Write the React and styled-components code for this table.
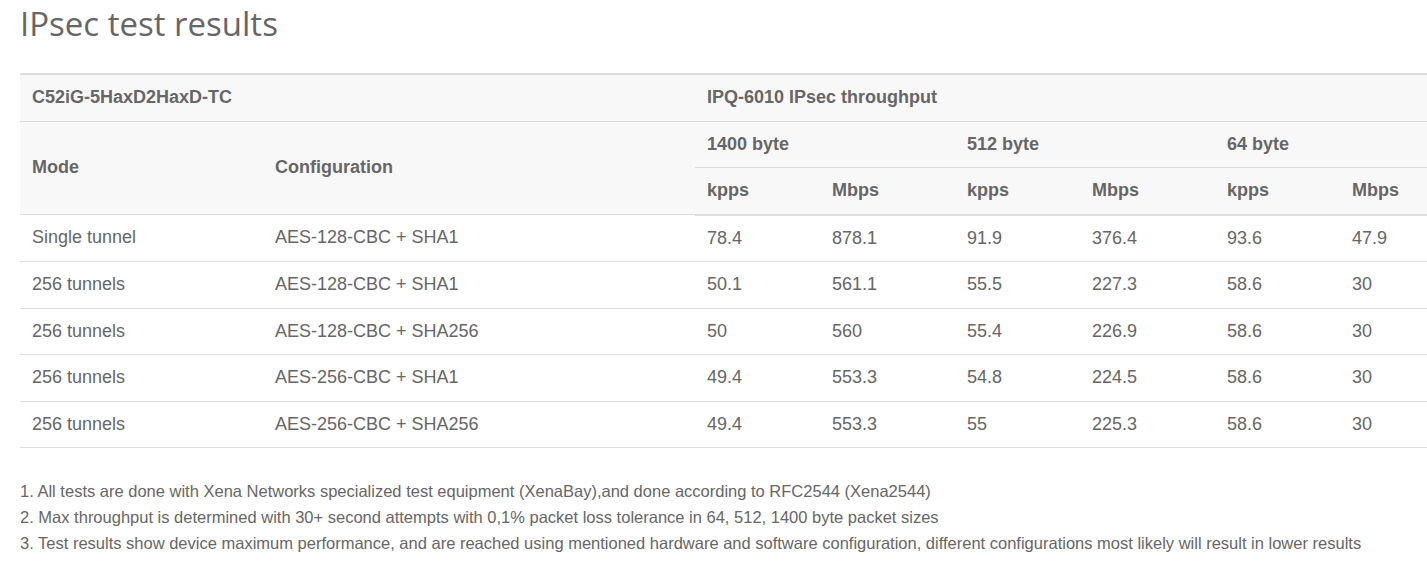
import React from "react";
import styled, { createGlobalStyle } from "styled-components";

const GlobalStyle = createGlobalStyle`
  body {
    margin: 0;
    background: #fff;
    font-family: "Liberation Sans", Arial, sans-serif;
    color: #666;
    overflow: hidden;
  }
`;

const rows = [
  ["Single tunnel", "AES-128-CBC + SHA1", "78.4", "878.1", "91.9", "376.4", "93.6", "47.9"],
  ["256 tunnels", "AES-128-CBC + SHA1", "50.1", "561.1", "55.5", "227.3", "58.6", "30"],
  ["256 tunnels", "AES-128-CBC + SHA256", "50", "560", "55.4", "226.9", "58.6", "30"],
  ["256 tunnels", "AES-256-CBC + SHA1", "49.4", "553.3", "54.8", "224.5", "58.6", "30"],
  ["256 tunnels", "AES-256-CBC + SHA256", "49.4", "553.3", "55", "225.3", "58.6", "30"],
];

const notes = [
  "All tests are done with Xena Networks specialized test equipment (XenaBay),and done according to RFC2544 (Xena2544)",
  "Max throughput is determined with 30+ second attempts with 0,1% packet loss tolerance in 64, 512, 1400 byte packet sizes",
  "Test results show device maximum performance, and are reached using mentioned hardware and software configuration, different configurations most likely will result in lower results",
];

const widths = [243, 432, 125, 135, 125, 135, 125, 135];

export default function App() {
  return (
    <Page>
      <GlobalStyle />
      <Title>IPsec test results</Title>
      <Table>
        <colgroup>
          {widths.map((w, i) => (
            <col key={i} style={{ width: w }} />
          ))}
        </colgroup>
        <thead>
          <tr>
            <Th colSpan={2}>C52iG-5HaxD2HaxD-TC</Th>
            <Th colSpan={6}>IPQ-6010 IPsec throughput</Th>
          </tr>
          <tr>
            <Th rowSpan={2}>Mode</Th>
            <Th rowSpan={2}>Configuration</Th>
            <Th colSpan={2}>1400 byte</Th>
            <Th colSpan={2}>512 byte</Th>
            <Th colSpan={2}>64 byte</Th>
          </tr>
          <tr>
            {["kpps", "Mbps", "kpps", "Mbps", "kpps", "Mbps"].map((u, i) => (
              <Th key={i} $last>
                {u}
              </Th>
            ))}
          </tr>
        </thead>
        <tbody>
          {rows.map((r, i) => (
            <tr key={i}>
              {r.map((c, j) => (
                <Td key={j}>{c}</Td>
              ))}
            </tr>
          ))}
        </tbody>
      </Table>
      <Notes>
        {notes.map((n, i) => (
          <li key={i}>{n}</li>
        ))}
      </Notes>
    </Page>
  );
}

const Page = styled.div`
  padding: 0 0 0 20px;
  width: 1600px;
`;

const Title = styled.h1`
  margin: 0;
  padding-top: 2px;
  font-family: "Open Sans", sans-serif;
  font-weight: 400;
  font-size: 33px;
  line-height: 44px;
  color: #666;
`;

const Table = styled.table`
  margin-top: 27px;
  border-collapse: collapse;
  table-layout: fixed;
  width: 1455px;
  border-top: 2px solid #ddd;
  font-size: 18px;
  line-height: 25.5px;
`;

const Th = styled.th`
  text-align: left;
  font-weight: bold;
  color: #666;
  background: #f8f8f8;
  padding: 10px 12px;
  border-top: 1px solid #ddd;
  border-bottom: ${(p) => (p.$last ? "2px solid #ddd" : "1px solid #ddd")};
  white-space: nowrap;
  vertical-align: middle;
`;

const Td = styled.td`
  padding: 10px 12px;
  color: #666;
  border-bottom: 1px solid #ddd;
  white-space: nowrap;
`;

const Notes = styled.ol`
  margin: 30px 0 0;
  padding: 0;
  list-style: none;
  counter-reset: note;
  font-size: 16.5px;
  line-height: 26px;
  color: #666;

  li {
    counter-increment: note;
  }
  li::before {
    content: counter(note) ". ";
  }
`;
